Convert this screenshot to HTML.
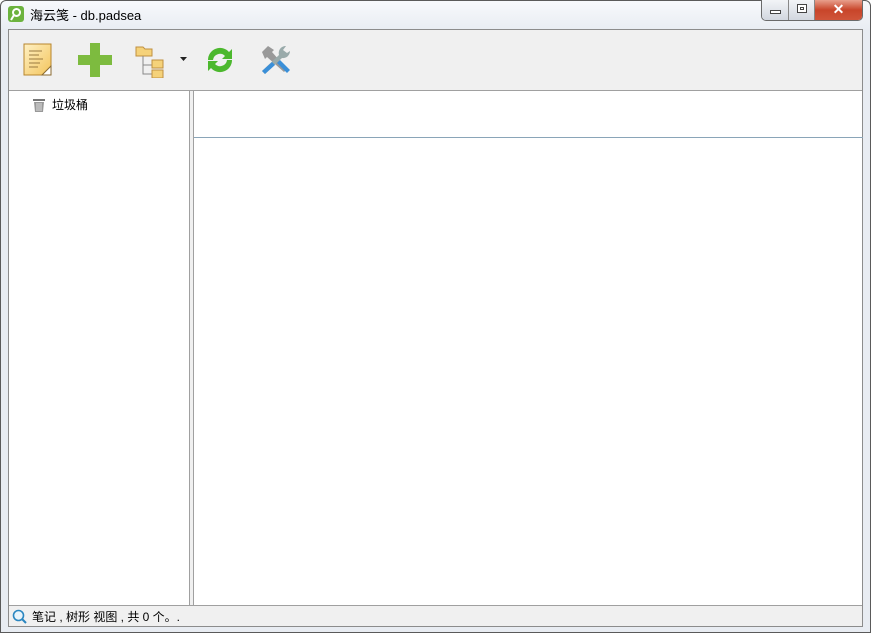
<!DOCTYPE html>
<html><head><meta charset="utf-8"><style>
*{margin:0;padding:0;box-sizing:border-box}
body{width:871px;height:633px;overflow:hidden;background:#fff;font-family:"Liberation Sans","Noto Sans CJK SC",sans-serif;font-size:12px;position:relative}
.win{position:absolute;left:0;top:0;width:871px;height:633px;border:1px solid #5a5a5a;border-radius:6px 6px 0 0;background:linear-gradient(#f7f9fc,#e8ecf2 30px,#e8ecf2);}
.title{position:absolute;left:29px;top:4px;font-size:13px;color:#000}
.client{position:absolute;left:7px;top:28px;width:855px;height:598px;border:1px solid #8c8c8c;background:#f0f0f0}
.tb{position:absolute;left:0;top:0;width:853px;height:61px;background:#f0f0f0;border-bottom:1px solid #a0a0a0}
.left{position:absolute;left:0;top:61px;width:181px;height:514px;background:#fff;border-right:1px solid #a0a0a0}
.right{position:absolute;left:184px;top:61px;width:669px;height:514px;background:#fff;border-left:1px solid #a0a0a0}
.sb{position:absolute;left:0;top:575px;width:853px;height:21px;background:#f0f0f0;border-top:1px solid #a0a0a0}
</style></head><body>
<div class="win">
<svg style="position:absolute;left:7px;top:5px" width="16" height="16"><rect width="16" height="16" rx="3" fill="#6cb33e"/><circle cx="8.5" cy="6.5" r="3.5" fill="none" stroke="#fff" stroke-width="2"/><path d="M6 9 L3 14" stroke="#fff" stroke-width="2"/></svg>
<div class="title">海云笺 - db.padsea</div>
<div style="position:absolute;left:760px;top:-1px;width:102px;height:21px;border:1px solid #6a6a6a;border-top:none;border-radius:0 0 5px 5px;overflow:hidden;display:flex">
<div style="width:27px;background:linear-gradient(#f2f4f7,#d2d7df);border-right:1px solid #888;position:relative"><div style="position:absolute;left:8px;top:10px;width:11px;height:4px;border:1px solid #444;background:#fff"></div></div>
<div style="width:26px;background:linear-gradient(#f2f4f7,#d2d7df);border-right:1px solid #888;position:relative"><div style="position:absolute;left:8px;top:4px;width:10px;height:9px;border:1px solid #444;background:#fff"><div style="margin:2px;height:3px;border:1px solid #444"></div></div></div>
<div style="flex:1;background:linear-gradient(#e8a08c,#c8452a 50%,#d0553a);color:#fff;font-weight:bold;font-size:14px;text-align:center;line-height:19px">✕</div>
</div>
<div class="client">
<div class="tb">
<svg style="position:absolute;left:14px;top:13px" width="30" height="34"><defs><linearGradient id="g" x1="0" y1="0" x2="1" y2="1"><stop offset="0" stop-color="#fff1c4"/><stop offset="1" stop-color="#f3c45c"/></linearGradient></defs><rect x="1" y="1" width="27" height="31" fill="url(#g)" stroke="#b8862e"/><path d="M6 8h13M6 12h10M6 16h14M6 20h11M6 24h9" stroke="#9a7a40"/><path d="M19 32 L28 23 L28 32Z" fill="#fff" stroke="#8a6a30"/></svg>
<svg style="position:absolute;left:69px;top:13px" width="34" height="34"><path d="M12 0h10v12h12v10H22v12H12V22H0V12h12z" fill="#7dbb3f"/></svg>
<svg style="position:absolute;left:126px;top:15px" width="30" height="33"><path d="M1 2h7l2 2h7v7H1z" fill="#f5d27a" stroke="#c09040"/><path d="M8 11v18h9M8 20h9" stroke="#888" fill="none"/><rect x="17" y="15" width="11" height="8" fill="#f5d27a" stroke="#c09040"/><rect x="17" y="25" width="11" height="8" fill="#f5d27a" stroke="#c09040"/></svg>
<svg style="position:absolute;left:171px;top:27px" width="8" height="5"><path d="M0 0h7L3.5 4z" fill="#222"/></svg>
<svg style="position:absolute;left:196px;top:15px" width="30" height="30"><path d="M3 15a12 12 0 0 1 21-8l3-3v10H17l3-3a7 7 0 0 0-12 4z" fill="#4cb82e"/><path d="M27 15a12 12 0 0 1-21 8l-3 3V16h10l-3 3a7 7 0 0 0 12-4z" fill="#4cb82e"/></svg>
<svg style="position:absolute;left:250px;top:13px" width="32" height="34"><path d="M3 9l6-6 6 4-2 2 15 17-3 3-17-15-2 2z" fill="#999"/><path d="M26 3a7 7 0 0 0-6 9L3 28l3 3 17-16a7 7 0 0 0 8-7l-3 2-4-3 3-4z" fill="#9aa"/><path d="M3 28l10-9 3 3-10 9z" fill="#3a8fd8"/><path d="M18 20l3-3 10 10-3 3z" fill="#3a8fd8"/></svg>
</div>
<div class="left">
<svg style="position:absolute;left:23px;top:7px" width="14" height="15"><rect x="1" y="1" width="12" height="2" fill="#777"/><path d="M2 4h10l-1 10H3z" fill="#999"/><path d="M5 5v8M7 5v8M9 5v8" stroke="#ddd"/></svg>
<div style="position:absolute;left:43px;top:5px;font-size:12px">垃圾桶</div>
</div>
<div class="right"><div style="position:absolute;left:0;top:46px;width:669px;border-top:1px solid #8aa5b8"></div></div>
<div class="sb">
<svg style="position:absolute;left:3px;top:3px" width="15" height="15"><circle cx="6.5" cy="6.5" r="5" fill="#e8f4fb" stroke="#2a86c0" stroke-width="1.6"/><path d="M10 10l4 4" stroke="#2a86c0" stroke-width="2"/></svg>
<div style="position:absolute;left:23px;top:2px;font-size:12px">笔记 , 树形 视图 , 共 0 个。.</div>
</div>
</div>
</div>
</body></html>
